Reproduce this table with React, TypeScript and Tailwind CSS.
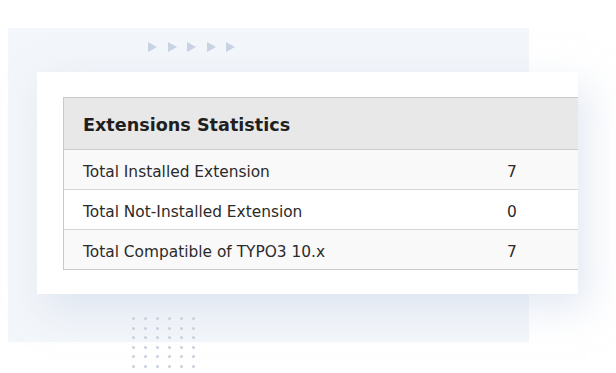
import React from "react";

type StatRow = {
  label: string;
  value: number;
};

const rows: StatRow[] = [
  { label: "Total Installed Extension", value: 7 },
  { label: "Total Not-Installed Extension", value: 0 },
  { label: "Total Compatible of TYPO3 10.x", value: 7 },
];

// Row of small arrow markers above the card
const Arrows = () => (
  <div className="flex gap-[10.5px] h-[10px]">
    {[0, 1, 2, 3, 4].map((i) => (
      <svg key={i} width="9" height="10" viewBox="0 0 9 10">
        <path d="M0 0 L9 5 L0 10 Z" fill="#c9d3e3" />
      </svg>
    ))}
  </div>
);

// 6x6 dot pattern under the card
const Dots = () => (
  <div className="grid grid-cols-6 gap-x-[9px] gap-y-[6.6px] w-fit">
    {Array.from({ length: 36 }).map((_, i) => (
      <span key={i} className="block w-[3px] h-[3px] rounded-full bg-[#c8d0dd]" />
    ))}
  </div>
);

const StatsTable = () => (
  <div className="w-[560px] border border-r-0 border-[#c9c9c9] text-[#2b2b2b]">
    <div className="h-[52px] flex items-center bg-[#e8e8e8] border-b border-[#cdcdcd] pl-[19px] pt-[3px]">
      <h2 className="text-[17.6px] font-bold text-[#1f1f1f]">Extensions Statistics</h2>
    </div>
    {rows.map((row, index) => (
      <div
        key={row.label}
        className={`flex items-center text-[15.4px] pt-[6px] ${
          index % 2 === 0 ? "bg-[#f9f9f9]" : "bg-white"
        } ${index < rows.length - 1 ? "h-[40px] border-b border-[#d6d6d6]" : "h-[39px]"}`}
      >
        <div className="w-[424px] pl-[19px]">{row.label}</div>
        <div className="pl-[19px]">{row.value}</div>
      </div>
    ))}
  </div>
);

export default function App() {
  return (
    <div
      className="w-[616px] h-[373px] bg-white overflow-hidden pt-[28px] pl-[8px]"
      style={{ fontFamily: '"DejaVu Sans", Verdana, sans-serif' }}
    >
      <div className="w-[521px] h-[314px] bg-[#f3f6fa] flex flex-col">
        <div className="mt-[14px] ml-[140px]">
          <Arrows />
        </div>
        <div className="mt-[20px] ml-[29px] w-[541px] h-[222px] shrink-0 bg-white overflow-hidden pl-[26px] pt-[25px] shadow-[10px_14px_36px_rgba(200,212,232,0.5)]">
          <StatsTable />
        </div>
        <div className="mt-[23px] ml-[124px]">
          <Dots />
        </div>
      </div>
    </div>
  );
}
